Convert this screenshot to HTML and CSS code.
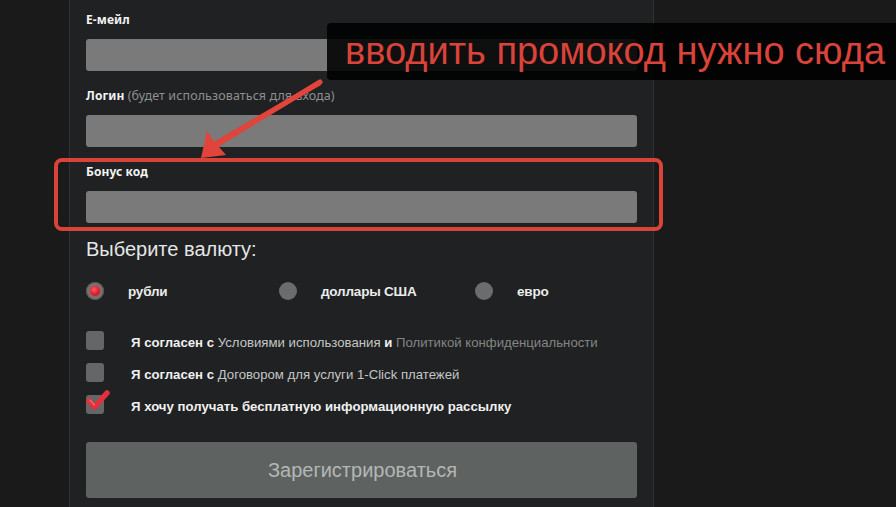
FILE: index.html
```html
<!DOCTYPE html>
<html lang="ru">
<head>
<meta charset="utf-8">
<title>Регистрация</title>
<link rel="stylesheet" href="styles.css">
</head>
<body>
<div class="page">
  <form class="panel">
    <div class="field">
      <label class="label">Е-мейл</label>
      <div class="input"></div>
    </div>
    <div class="field">
      <label class="label">Логин <span class="hint">(будет использоваться для входа)</span></label>
      <div class="input"></div>
    </div>
    <div class="field">
      <label class="label">Бонус код</label>
      <div class="input"></div>
    </div>
    <h2 class="heading">Выберите валюту:</h2>
    <div class="radios">
      <div class="radio-opt"><span class="radio checked"></span><span class="radio-label">рубли</span></div>
      <div class="radio-opt"><span class="radio"></span><span class="radio-label">доллары США</span></div>
      <div class="radio-opt"><span class="radio"></span><span class="radio-label">евро</span></div>
    </div>
    <div class="checks">
      <div class="check-row"><span class="box"></span><span class="check-label">Я согласен с <span class="link">Условиями использования</span> и <span class="link dim">Политикой конфиденциальности</span></span></div>
      <div class="check-row"><span class="box"></span><span class="check-label">Я согласен с <span class="link">Договором для услуги 1-Click платежей</span></span></div>
      <div class="check-row"><span class="box checked">
        <svg class="tick" width="26" height="24" viewBox="0 0 26 24"><path d="M3 11 L8.5 17 L21 3" fill="none" stroke="#e2313c" stroke-width="5.5" stroke-linecap="round" stroke-linejoin="round"/><path d="M4 10 L8.5 15" fill="none" stroke="#ff6b73" stroke-width="1.2" stroke-linecap="round"/></svg>
      </span><span class="check-label">Я хочу получать бесплатную информационную рассылку</span></div>
    </div>
    <button type="button" class="submit">Зарегистрироваться</button>
  </form>

  <div class="highlight"></div>
  <div class="note">вводить промокод нужно сюда</div>
  <svg class="arrow" width="896" height="507" viewBox="0 0 896 507">
    <path d="M318 81 L321 85 L214 147 L210 144 Z" fill="#e0443a"/>
    <path d="M320 82 L208 150" stroke="#e0443a" stroke-width="5" stroke-linecap="round"/>
    <path d="M201 158 L207 131 L213 140 L226 155 Z" fill="#e0443a"/>
  </svg>
</div>
</body>
</html>
```
FILE: styles.css
```css
* { box-sizing: border-box; }
html, body { margin: 0; padding: 0; }
body {
  background: #1a1a1a;
  font-family: "Liberation Sans", Arial, sans-serif;
  color: #ececec;
  width: 896px;
  height: 507px;
  overflow: hidden;
}
.page { position: relative; width: 896px; height: 507px; }

.panel {
  margin: 0 0 0 69px;
  width: 585px;
  height: 507px;
  background: #1f2122;
  border-left: 1px solid #2f3233;
  border-right: 1px solid #2f3233;
  padding: 12px 16px 0 16px;
  display: flex;
  flex-direction: column;
}
.field { display: flex; flex-direction: column; }
.field + .field { margin-top: 17px; }
.label {
  font-family: "Noto Sans", sans-serif;
  font-weight: 700;
  font-size: 12px;
  line-height: 16px;
  color: #f2f2f2;
  letter-spacing: 0.1px;
}
.hint { font-weight: 400; color: #8f8f8f; font-size: 12.5px; }
.input {
  margin-top: 11px;
  height: 32px;
  background: #7a7a7a;
  border-radius: 3px;
}
.heading {
  margin: 14px 0 0 0;
  font-weight: 400;
  font-size: 20px;
  line-height: 24px;
  color: #e6e6e6;
}
.radios {
  margin-top: 20px;
  display: grid;
  grid-template-columns: 193px 196px auto;
  height: 20px;
  align-items: center;
}
.radio-opt { display: flex; align-items: center; gap: 24px; }
.radio {
  width: 18px; height: 18px;
  border-radius: 50%;
  background: #6c6c6c;
  flex: none;
  display: flex; align-items: center; justify-content: center;
}
.radio.checked {
  background: #7a6f6f;
  box-shadow: 0 0 0 1px #5a5050 inset;
}
.radio.checked::after {
  content: "";
  width: 10px; height: 10px; border-radius: 50%;
  background: radial-gradient(circle at 40% 35%, #ff5a62 0%, #e01c2c 55%, #b0101e 100%);
}
.radio-label { font-size: 13.5px; font-weight: 700; color: #ececec; letter-spacing: -0.2px; }

.checks { margin-top: 30px; display: flex; flex-direction: column; gap: 13px; }
.check-row { display: flex; align-items: center; height: 19px; }
.box {
  position: relative;
  width: 18px; height: 19px; border-radius: 3px;
  background: #666;
  flex: none;
  margin-right: 27px;
}
.tick { position: absolute; left: 0; top: -5px; }
.check-label { font-size: 13.2px; font-weight: 700; color: #f0f0f0; white-space: nowrap; padding-top: 3px; }
.link { font-weight: 400; color: #c6c6c6; }
.link.dim { color: #858585; }

.submit {
  margin-top: 28px;
  height: 56px;
  width: 100%;
  border: 0;
  border-radius: 3px;
  background: #5e6261;
  color: #b4b7b5;
  font-family: "Liberation Sans", Arial, sans-serif;
  font-size: 20px;
  padding: 0 0 0 2px;
}

.highlight {
  position: absolute;
  left: 54px; top: 158px;
  width: 609px; height: 73px;
  border: 4px solid #d9443a;
  border-radius: 8px;
}
.note {
  position: absolute;
  left: 327px; top: 23px;
  width: 569px; height: 57px;
  background: rgba(0, 0, 0, 0.88);
  border-radius: 4px 0 0 4px;
  color: #d9433a;
  font-size: 38px;
  line-height: 57px;
  padding-left: 18px;
  white-space: nowrap;
}
.arrow { position: absolute; left: 0; top: 0; pointer-events: none; }
```
